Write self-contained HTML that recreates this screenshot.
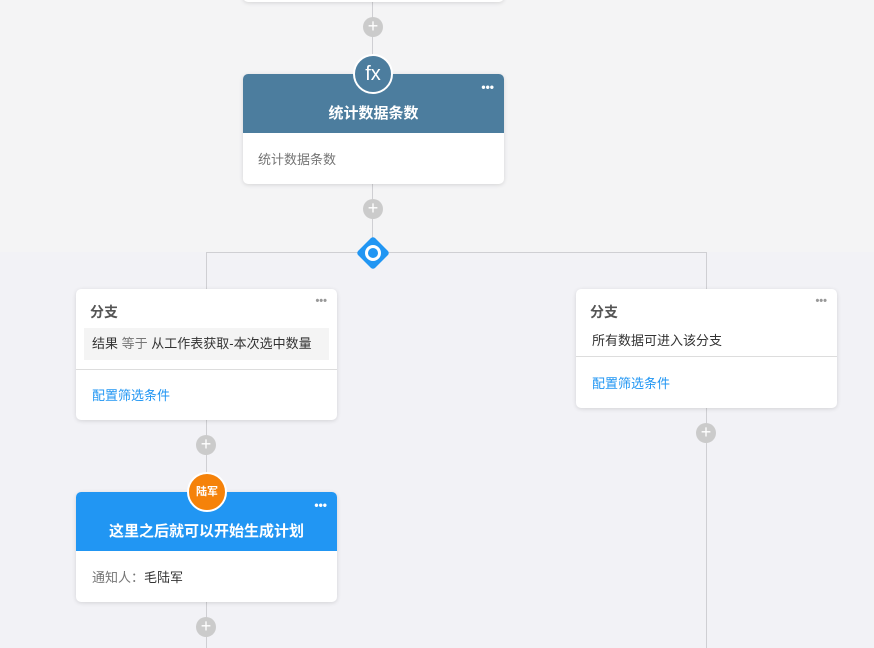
<!DOCTYPE html>
<html><head><meta charset="utf-8"><style>
*{margin:0;padding:0;box-sizing:border-box}
body{width:874px;height:648px;overflow:hidden;position:relative;background:#f2f2f6;font-family:"Liberation Sans","Noto Sans CJK SC",sans-serif;}
.top{position:absolute;left:0;top:0;width:874px;height:252px;background:#f4f4f5}
.ln{position:absolute;background:#cfcfd3}
.card{position:absolute;background:#fff;border-radius:5px;box-shadow:0 1px 4px rgba(0,0,0,.13);overflow:hidden}
.plus{position:absolute;width:20px;height:20px;border-radius:50%;background:#cbcbcb;color:#fff;font-size:18px;line-height:19px;text-align:center;font-weight:300}
.dots{position:absolute;right:10px;top:6px;font-size:12px;font-weight:bold}
.hd{height:59px;color:#fff;font-size:15px;font-weight:bold;text-align:center;line-height:80px;position:relative}
.circ{position:absolute;width:40px;height:40px;border-radius:50%;border:2px solid #fff;color:#fff;text-align:center}
</style></head><body>
<div class="top"></div>
<div class="ln" style="left:372px;top:0;width:1px;height:252px"></div>
<div class="ln" style="left:206px;top:252px;width:501px;height:1px"></div>
<div class="ln" style="left:206px;top:252px;width:1px;height:396px"></div>
<div class="ln" style="left:706px;top:252px;width:1px;height:396px"></div>

<div class="card" style="left:243px;top:-20px;width:261px;height:22px"></div>
<div class="plus" style="left:363px;top:17px">+</div>

<div class="card" style="left:243px;top:74px;width:261px;height:110px">
<div class="hd" style="background:#4c7d9e">统计数据条数<span class="dots" style="line-height:14px">•••</span></div>
<div style="padding:16px 15px;font-size:13px;color:#757575">统计数据条数</div>
</div>
<div class="circ" style="left:353px;top:54px;background:#4c7d9e;font-size:20px;line-height:37px">fx</div>
<div class="plus" style="left:363px;top:199px">+</div>

<div style="position:absolute;left:361px;top:241px;width:24px;height:24px;background:#2196f3;transform:rotate(45deg);border-radius:3px"></div>
<div style="position:absolute;left:365px;top:245px;width:16px;height:16px;border:3px solid #fff;border-radius:50%"></div>

<div class="card" style="left:76px;top:289px;width:261px;height:131px">
<div style="position:absolute;left:14px;top:13px;font-size:14px;font-weight:bold;color:#555">分支</div>
<span class="dots" style="color:#999;font-size:11px">•••</span>
<div style="position:absolute;left:8px;top:39px;width:245px;height:32px;background:#f4f4f4;font-size:13px;line-height:32px;padding-left:8px;color:#333">结果 <span style="color:#777">等于</span> 从工作表获取-本次选中数量</div>
<div style="position:absolute;left:0;top:80px;width:261px;height:1px;background:#ddd"></div>
<div style="position:absolute;left:16px;top:96px;font-size:13px;color:#2196f3">配置筛选条件</div>
</div>

<div class="card" style="left:576px;top:289px;width:261px;height:119px">
<div style="position:absolute;left:14px;top:13px;font-size:14px;font-weight:bold;color:#555">分支</div>
<span class="dots" style="color:#999;font-size:11px">•••</span>
<div style="position:absolute;left:16px;top:41px;font-size:13px;color:#333">所有数据可进入该分支</div>
<div style="position:absolute;left:0;top:67px;width:261px;height:1px;background:#ddd"></div>
<div style="position:absolute;left:16px;top:84px;font-size:13px;color:#2196f3">配置筛选条件</div>
</div>

<div class="plus" style="left:196px;top:435px">+</div>
<div class="plus" style="left:696px;top:423px">+</div>

<div class="card" style="left:76px;top:492px;width:261px;height:110px">
<div class="hd" style="background:#2196f3">这里之后就可以开始生成计划<span class="dots" style="line-height:14px">•••</span></div>
<div style="padding:16px 16px;font-size:13px;color:#333"><span style="color:#757575">通知人：</span>毛陆军</div>
</div>
<div class="circ" style="left:187px;top:472px;background:#f5820a;font-size:11px;font-weight:bold;line-height:36px">陆军</div>
<div class="plus" style="left:196px;top:617px">+</div>
</body></html>
